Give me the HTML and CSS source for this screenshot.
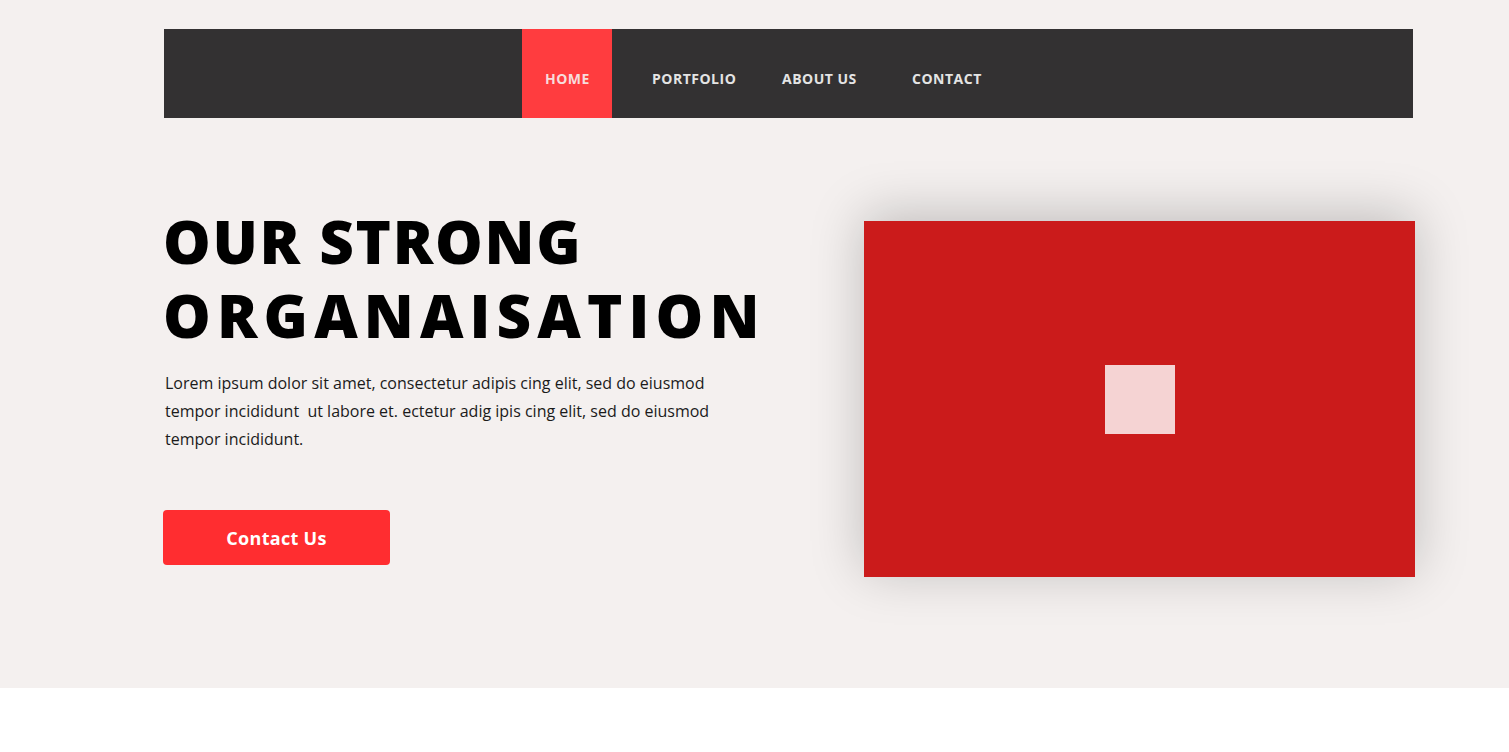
FILE: index.html
```html
<!DOCTYPE html>
<html lang="en">
<head>
<meta charset="utf-8">
<title>Our Strong Organisation</title>
<link rel="stylesheet" href="styles.css">
</head>
<body>
<section class="hero">
  <header class="nav">
    <ul class="menu">
      <li class="item"><a class="link active" href="#">HOME</a></li>
      <li class="item"><a class="link" href="#">PORTFOLIO</a></li>
      <li class="item"><a class="link" href="#">ABOUT US</a></li>
      <li class="item"><a class="link" href="#">CONTACT</a></li>
    </ul>
  </header>
  <div class="content">
    <div class="text">
      <h1 class="title"><span class="line1">OUR STRONG</span><span class="line2">ORGANAISATION</span></h1>
      <p class="lead">Lorem ipsum dolor sit amet, consectetur adipis cing elit, sed do eiusmod tempor incididunt&nbsp; ut labore et. ectetur adig ipis cing elit, sed do eiusmod tempor incididunt.</p>
      <a class="btn" href="#">Contact Us</a>
    </div>
    <div class="media">
      <div class="thumb"></div>
    </div>
  </div>
</section>
</body>
</html>
```
FILE: styles.css
```css
* { box-sizing: border-box; }
html, body { margin: 0; padding: 0; }
body {
  font-family: "Open Sans", "Liberation Sans", sans-serif;
  background: #ffffff;
  color: #111;
}
.hero {
  background: #f4f0ef;
  height: 688px;
  padding-top: 29px;
}
.nav {
  margin-left: 164px;
  width: 1249px;
  height: 89px;
  background: #333132;
}
.menu {
  list-style: none;
  margin: 0;
  padding: 0 0 0 358px;
  display: flex;
  height: 100%;
}
.item {
  width: 130px;
  height: 100%;
  display: flex;
}
.link {
  display: flex;
  align-items: center;
  padding-top: 10px;
  height: 100%;
  font-size: 14px;
  font-weight: 700;
  letter-spacing: 0.5px;
  color: #e4e4e4;
  text-decoration: none;
}
.link.active {
  background: #ff3c3f;
  color: #f7dcdc;
  padding: 10px 0 0 23px;
  width: 90px;
}
.content {
  display: flex;
  margin-left: 163px;
  margin-top: 103px;
}
.text {
  width: 701px;
}
.title {
  margin: 0;
  font-size: 60px;
  font-weight: 800;
  line-height: 74px;
  color: #000;
}
.line1, .line2 { display: block; }
.line1 { letter-spacing: 1.7px; margin-top: -17px; }
.line2 { letter-spacing: 6.1px; }
.lead {
  margin: 17px 0 0 2px;
  width: 560px;
  font-size: 16px;
  line-height: 28px;
  color: #1b1b1b;
}
.btn {
  display: flex;
  align-items: center;
  justify-content: center;
  margin-top: 57px;
  width: 227px;
  height: 55px;
  border-radius: 4px;
  background: #ff2d30;
  color: #fff;
  font-size: 18px;
  font-weight: 700;
  letter-spacing: 0.3px;
  text-decoration: none;
}
.media {
  width: 551px;
  height: 356px;
  background: #cb1b1b;
  display: flex;
  align-items: center;
  justify-content: center;
  box-shadow: 0 -6px 50px rgba(0, 0, 0, 0.22);
}
.thumb {
  width: 70px;
  height: 69px;
  background: #f5d3d3;
}
```
